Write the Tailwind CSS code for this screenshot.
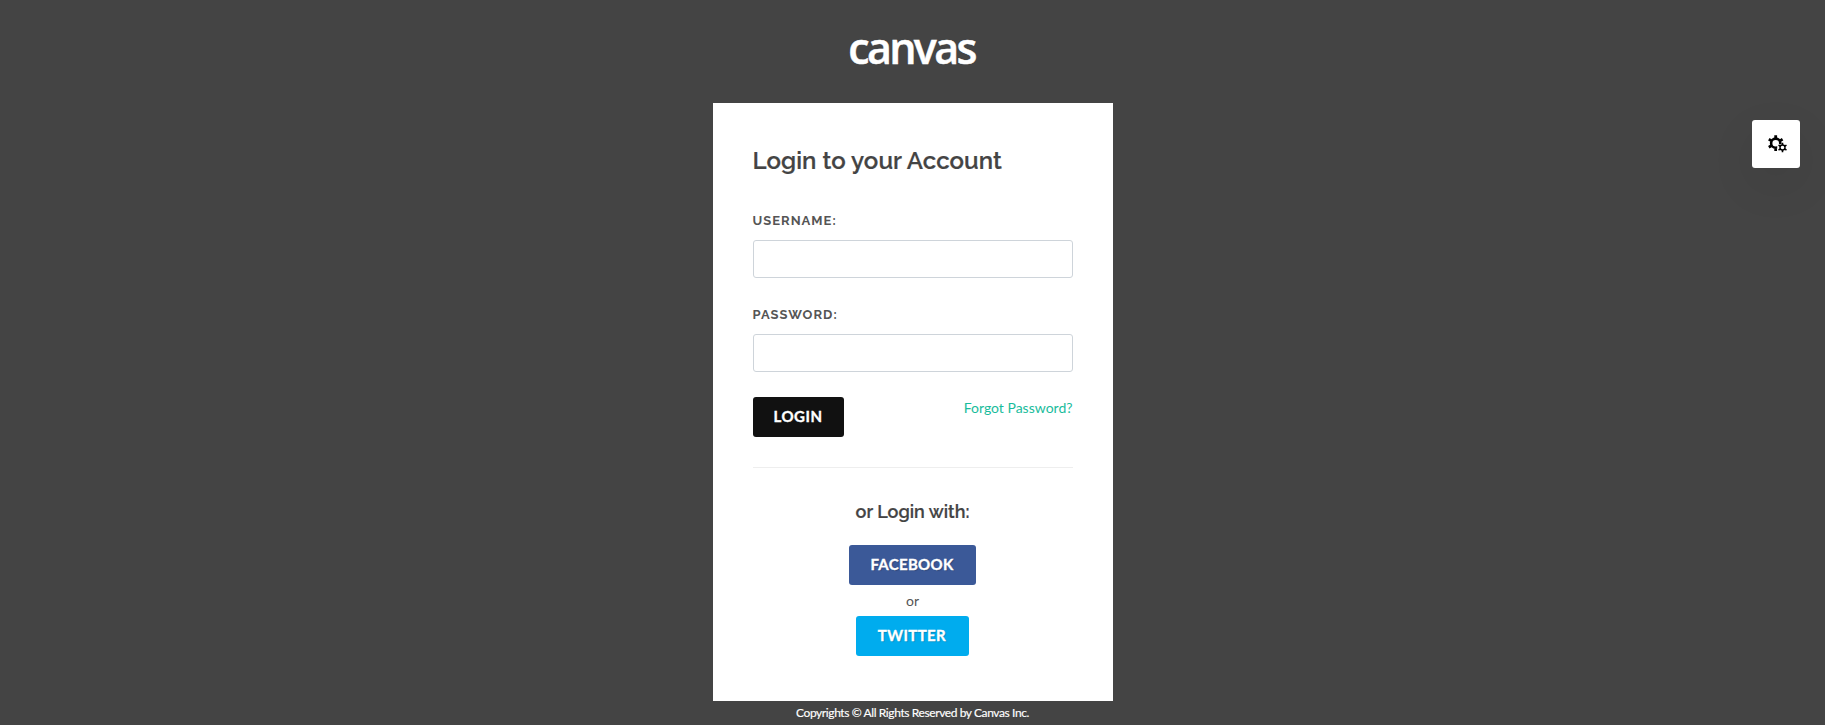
<!DOCTYPE html>
<html lang="en">
<head>
<meta charset="utf-8">
<title>Canvas Login</title>
<script src="https://cdn.jsdelivr.net/npm/@tailwindcss/browser@4"></script>
</head>
<body class="h-screen overflow-hidden bg-[#444] font-['Lato',sans-serif] text-sm text-[#555]">
<div class="flex flex-col items-center">
  <header class="flex h-[103px] items-start pt-[18px]">
    <a class="mr-0.5 font-['Open_Sans',sans-serif] text-[43px] leading-[60px] font-semibold tracking-[-2.7px] text-white [-webkit-text-stroke:0.5px_white]">canvas</a>
  </header>
  <main class="h-[598px] w-[400px] bg-white px-10 pt-10">
    <form class="flex flex-col">
      <h3 class="pt-0.5 text-2xl leading-8 font-semibold text-[#444] font-['Raleway','Lato',sans-serif] tracking-[0.08px] whitespace-nowrap [-webkit-text-stroke:0.2px_#444]">Login to your Account</h3>
      <label for="username" class="mt-[34px] text-[13px] leading-5 font-bold tracking-[1px] uppercase font-['Raleway','Lato',sans-serif]">Username:</label>
      <input id="username" type="text" class="mt-[9px] h-[38px] w-full rounded-[3px] border border-[#ced4da] bg-white">
      <label for="password" class="mt-[27px] text-[13px] leading-5 font-bold tracking-[1px] uppercase font-['Raleway','Lato',sans-serif]">Password:</label>
      <input id="password" type="password" class="mt-[9px] h-[38px] w-full rounded-[3px] border border-[#ced4da] bg-white">
      <div class="mt-[25px] flex items-start justify-between">
        <button type="button" class="h-10 w-[91px] rounded-[3px] bg-[#111] text-[15px] leading-[38px] pb-0.5 font-bold tracking-[0.5px] text-white [-webkit-text-stroke:0.35px_white]">LOGIN</button>
        <a class="leading-[21px] text-[#1abc9c]">Forgot Password?</a>
      </div>
    </form>
    <div class="mt-[30px] h-px bg-[#eee]"></div>
    <div class="flex flex-col items-center pt-[30px]">
      <h4 class="text-lg leading-[27px] font-semibold text-[#444] font-['Raleway','Lato',sans-serif] [-webkit-text-stroke:0.2px_#444]">or Login with:</h4>
      <a class="mt-5 mr-px h-10 w-[127px] rounded-[3px] bg-[#3b5998] text-center text-[15px] leading-[38px] font-bold tracking-[0.3px] text-white [-webkit-text-stroke:0.35px_white] [text-shadow:1px_1px_1px_rgba(0,0,0,0.2)]">FACEBOOK</a>
      <span class="leading-[31px]">or</span>
      <a class="mr-px h-10 w-[113px] rounded-[3px] bg-[#00acee] text-center text-[15px] leading-[38px] font-bold tracking-[0.4px] text-white [-webkit-text-stroke:0.35px_white] [text-shadow:1px_1px_1px_rgba(0,0,0,0.2)]">TWITTER</a>
    </div>
  </main>
  <footer class="text-xs leading-6 tracking-[-0.4px] text-white [-webkit-text-stroke:0.15px_white]">Copyrights © All Rights Reserved by Canvas Inc.</footer>
</div>
<button aria-label="Settings" class="fixed top-[120px] right-[25px] size-12 rounded-[3px] bg-white shadow-[0_16px_48px_rgba(0,0,0,0.075)]">
  <svg class="size-12" viewBox="0 0 48 48">
    <g fill="none" stroke="#000">
      <circle cx="23.7" cy="23.2" r="4.6" stroke-width="2.6"/>
      <path d="M23.7 18V15.3M23.7 28.4v2.7M19.2 20.6L16.8 19.2M19.2 25.8L16.8 27.2M28.2 20.6l2.4-1.4" stroke-width="2.8"/>
    </g>
    <path d="M25.2 24.2h11v8.2h-11z" fill="#fff"/>
    <path d="M30.5 25v-2.2M30.5 30v2.3M28.5 26.2l-2-1.1M28.5 28.9l-2 1.1M32.5 26.2l2-1.1M32.5 28.9l2 1.1" stroke="#000" stroke-width="1.6"/>
    <circle cx="30.5" cy="27.5" r="2.5" fill="#fff" stroke="#000" stroke-width="1.4"/>
  </svg>
</button>
</body>
</html>
